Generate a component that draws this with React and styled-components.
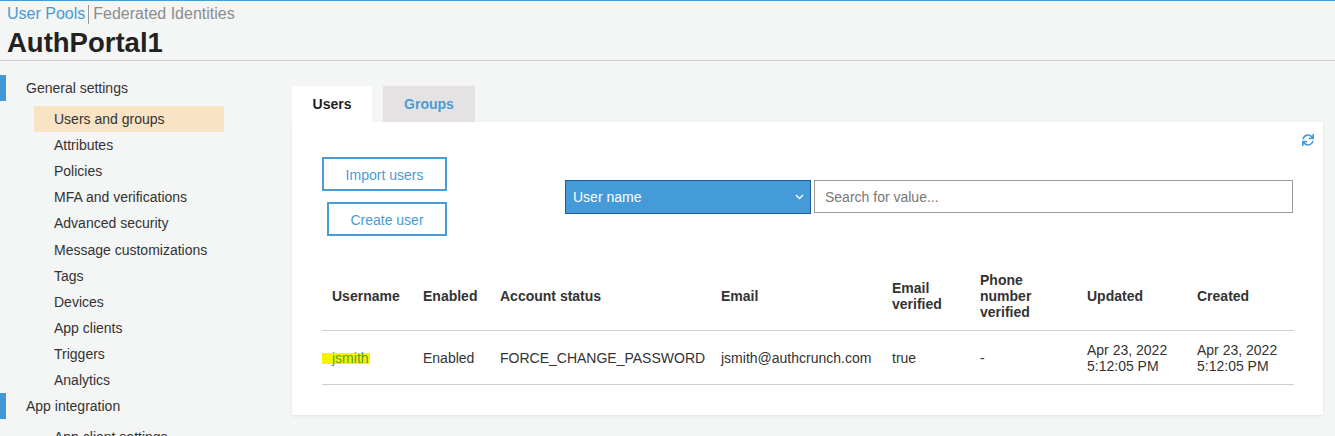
import React from 'react'
import styled, { createGlobalStyle } from 'styled-components'
import { FaSync } from 'react-icons/fa'

const GlobalStyle = createGlobalStyle`
    html, body {
        margin: 0;
        padding: 0;
        background: #f4f5f5;
        font-family: "Liberation Sans", Arial, sans-serif;
        color: #333;
    }
`;

const Page = styled.div`
    border-top: 1px solid #459bd7;
    min-height: 435px;
    overflow: hidden;
`;

const Header = styled.header`
    padding-left: 7px;
    border-bottom: 1px solid #cdcdcd;
`;

const Breadcrumb = styled.div`
    display: flex;
    align-items: center;
    height: 24px;
    padding-top: 1px;
    font-size: 16px;
`;

const Crumb = styled.span`
    color: ${p => (p.$active ? '#479ad6' : '#8c8c8c')};
`;

const Divider = styled.span`
    display: inline-block;
    width: 0;
    height: 19px;
    border-left: 1px solid #999;
    margin: 0 4px 0 3px;
`;

const Title = styled.h1`
    margin: 0;
    font-size: 27.5px;
    line-height: 34px;
    font-weight: 700;
    color: #222;
`;

const Body = styled.div`
    display: flex;
`;

const Sidebar = styled.nav`
    width: 292px;
    flex: none;
    padding-top: 14px;
`;

const SectionTitle = styled.div`
    display: flex;
    align-items: center;
    height: 26px;
    margin-bottom: 5px;
    font-size: 14px;
    color: #333;
    &::before {
        content: '';
        width: 6px;
        height: 26px;
        background: #3f98d8;
        margin-right: 20px;
    }
`;

const NavItem = styled.div`
    display: flex;
    align-items: center;
    width: 190px;
    height: 26.1px;
    margin-left: 34px;
    padding-left: 20px;
    box-sizing: border-box;
    font-size: 14px;
    color: #333;
    background: ${p => (p.$active ? '#f8e4c5' : 'transparent')};
`;

const Main = styled.main`
    width: 1031px;
    padding-top: 25px;
`;

const Tabs = styled.div`
    display: flex;
    gap: 11px;
`;

const Tab = styled.div`
    display: flex;
    align-items: center;
    justify-content: center;
    width: ${p => p.$w}px;
    height: 36px;
    font-size: 14px;
    font-weight: 700;
    color: ${p => (p.$active ? '#1f1f1f' : '#4a9bd6')};
    background: ${p => (p.$active ? '#fff' : '#e4e2e3')};
`;

const Panel = styled.section`
    background: #fff;
    padding: 12px 9px 30px 30px;
    box-shadow: 0 1px 3px rgba(0, 0, 0, 0.08);
`;

const RefreshRow = styled.div`
    display: flex;
    justify-content: flex-end;
    height: 12px;
    color: #479ad6;
`;

const Content = styled.div`
    margin-right: 19px;
    margin-top: 11px;
`;

const Toolbar = styled.div`
    display: flex;
    align-items: center;
`;

const ButtonColumn = styled.div`
    display: flex;
    flex-direction: column;
    align-items: flex-end;
    gap: 11px;
    width: 125px;
`;

const OutlineButton = styled.button`
    width: ${p => p.$w}px;
    height: 34px;
    border: 2px solid #4a9bd6;
    background: #fff;
    color: #4a9bd6;
    font-family: inherit;
    font-size: 14px;
    padding: 2px 0 0;
`;

const Select = styled.div`
    display: flex;
    align-items: center;
    justify-content: space-between;
    margin-left: 118px;
    width: 246px;
    height: 34px;
    box-sizing: border-box;
    padding: 0 6px 0 7px;
    background: #449bd8;
    border: 1px solid #1f5d99;
    color: #fff;
    font-size: 14px;
`;

const SearchInput = styled.input`
    margin-left: 3px;
    width: 479px;
    height: 33px;
    box-sizing: border-box;
    border: 1px solid #9a9a9a;
    padding: 0 10px;
    font-family: inherit;
    font-size: 14px;
    color: #333;
    &::placeholder {
        color: #777;
    }
`;

const Table = styled.table`
    width: 972px;
    margin-top: 26px;
    border-collapse: collapse;
    table-layout: fixed;
    font-size: 14px;
    line-height: 16px;
`;

const Th = styled.th`
    text-align: left;
    font-weight: 700;
    color: #333;
    padding: 10px 10px;
    border-bottom: 1px solid #cfcfcf;
    vertical-align: middle;
`;

const Td = styled.td`
    padding: 11px 10px 10px;
    color: #333;
    border-bottom: 1px solid #cfcfcf;
    vertical-align: middle;
`;

const Highlight = styled.span`
    display: inline-block;
    margin-left: -10px;
    padding: 0 1px 0 10px;
    line-height: 11px;
    background: #f6f500;
    color: #5a9e2c;
`;

const columns = [
    ['Username', 91],
    ['Enabled', 77],
    ['Account status', 221],
    ['Email', 171],
    ['Email verified', 88],
    ['Phone number verified', 107],
    ['Updated', 110],
    ['Created', 107],
];

const general = [
    'Users and groups',
    'Attributes',
    'Policies',
    'MFA and verifications',
    'Advanced security',
    'Message customizations',
    'Tags',
    'Devices',
    'App clients',
    'Triggers',
    'Analytics',
];

const Chevron = () => (
    <svg width="9" height="6" viewBox="0 0 9 6">
        <polyline points="1,1 4.5,4.5 8,1" fill="none" stroke="#fff" strokeWidth="1.4" />
    </svg>
);

const App = () => {
    return (
        <Page>
            <GlobalStyle />
            <Header>
                <Breadcrumb>
                    <Crumb $active>User Pools</Crumb>
                    <Divider />
                    <Crumb>Federated Identities</Crumb>
                </Breadcrumb>
                <Title>AuthPortal1</Title>
            </Header>
            <Body>
                <Sidebar>
                    <SectionTitle>General settings</SectionTitle>
                    {general.map((item, i) => (
                        <NavItem key={item} $active={i === 0}>{item}</NavItem>
                    ))}
                    <SectionTitle>App integration</SectionTitle>
                    <NavItem>App client settings</NavItem>
                </Sidebar>
                <Main>
                    <Tabs>
                        <Tab $active $w={80}>Users</Tab>
                        <Tab $w={92}>Groups</Tab>
                    </Tabs>
                    <Panel>
                        <RefreshRow>
                            <FaSync size={12} />
                        </RefreshRow>
                        <Content>
                            <Toolbar>
                                <ButtonColumn>
                                    <OutlineButton $w={125}>Import users</OutlineButton>
                                    <OutlineButton $w={120}>Create user</OutlineButton>
                                </ButtonColumn>
                                <Select>
                                    <span>User name</span>
                                    <Chevron />
                                </Select>
                                <SearchInput placeholder="Search for value..." />
                            </Toolbar>
                            <Table>
                                <colgroup>
                                    {columns.map(([name, w]) => (
                                        <col key={name} style={{ width: w }} />
                                    ))}
                                </colgroup>
                                <thead>
                                    <tr>
                                        {columns.map(([name]) => (
                                            <Th key={name}>{name}</Th>
                                        ))}
                                    </tr>
                                </thead>
                                <tbody>
                                    <tr>
                                        <Td><Highlight>jsmith</Highlight></Td>
                                        <Td>Enabled</Td>
                                        <Td>FORCE_CHANGE_PASSWORD</Td>
                                        <Td>jsmith@authcrunch.com</Td>
                                        <Td>true</Td>
                                        <Td>-</Td>
                                        <Td>Apr 23, 2022<br />5:12:05 PM</Td>
                                        <Td>Apr 23, 2022<br />5:12:05 PM</Td>
                                    </tr>
                                </tbody>
                            </Table>
                        </Content>
                    </Panel>
                </Main>
            </Body>
        </Page>
    );
}

export default App
